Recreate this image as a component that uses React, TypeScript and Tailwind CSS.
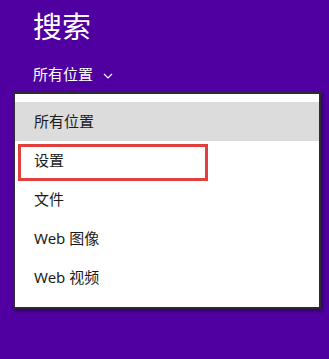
import React from "react";

const items = ["所有位置", "设置", "文件", "Web 图像", "Web 视频"];

export default function App() {
  return (
    <div
      className="w-[329px] h-[359px] bg-[#5000a0] overflow-hidden"
      style={{ fontFamily: '"Noto Sans", "Noto Sans CJK SC", sans-serif' }}
    >
      <div className="pl-[33px] pt-[8px] text-white">
        <div className="text-[29px] leading-[38px] font-normal">搜索</div>
        <div className="mt-[18px] flex items-center gap-[10px] text-[15px] leading-[20px]">
          <span>所有位置</span>
          <svg width="10" height="6" viewBox="0 0 10 6" className="mt-[3px]">
            <path d="M1 1 L5 5 L9 1" stroke="white" strokeWidth="1.2" fill="none" />
          </svg>
        </div>
      </div>
      <div className="relative ml-[13px] mt-[8px] w-[308px] h-[217px] border-2 border-[#2e2a33] bg-white pt-[8px] shadow-[2px_2px_3px_rgba(0,0,0,0.35)]">
        {items.map((t, i) => (
          <div
            key={t}
            className={`h-[39px] flex items-center pl-[19px] text-[15px] text-[#1b1b1b] ${
              i === 0 ? "bg-[#dcdcdc]" : ""
            }`}
          >
            {t}
          </div>
        ))}
        <div className="absolute left-[3px] top-[50px] w-[190px] h-[37px] border-[3px] border-[#e2403c]" />
      </div>
    </div>
  );
}
